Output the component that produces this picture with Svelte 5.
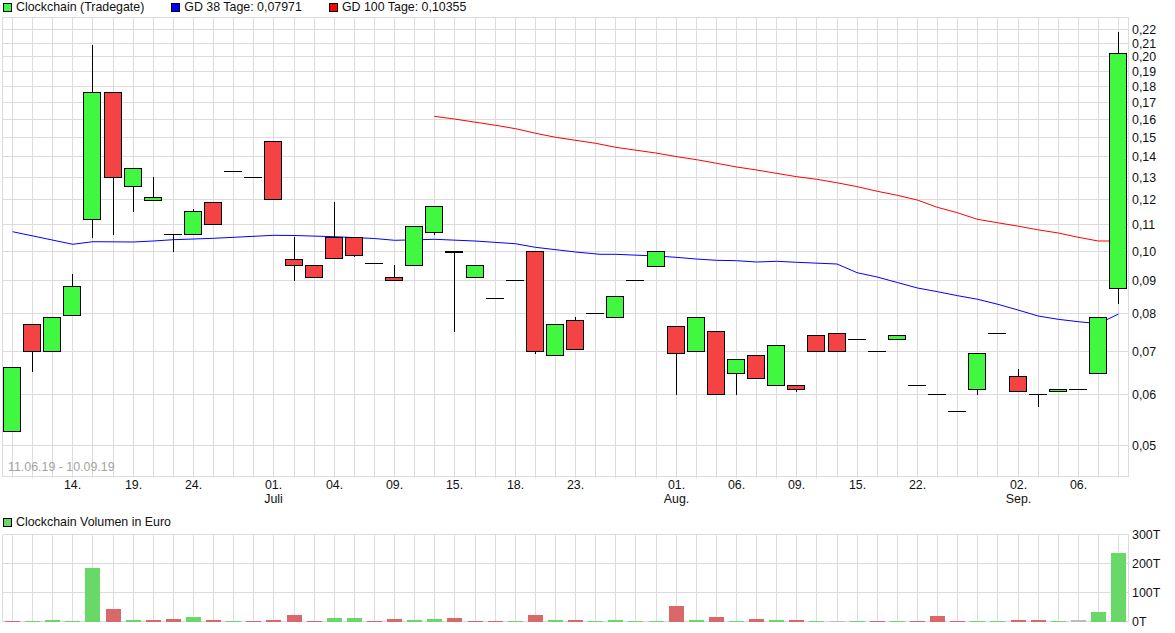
<script>
  // [type, top, bottom, wickTop, wickBottom] - type d is a doji (just a line)
  const candles = [
    ["g", 367.5, 431.5],
    ["r", 324.5, 351.5, 0, 372],
    ["g", 317.5, 351.5],
    ["g", 286.5, 315.5, 274],
    ["g", 92.5, 219.5, 45, 238],
    ["r", 92.5, 177.5, 0, 235],
    ["g", 168.5, 186.5, 0, 212],
    ["g", 197.5, 200.5, 177],
    ["d", 234.5, 234.5, 0, 252],
    ["g", 211.5, 234.5, 209],
    ["r", 202.5, 224.5],
    ["d", 171.5, 171.5],
    ["d", 177.5, 177.5],
    ["r", 141.5, 199.5],
    ["r", 259.5, 265.5, 237, 281],
    ["r", 265.5, 277.5],
    ["r", 237.5, 258.5, 202],
    ["r", 237.5, 255.5, 0, 257],
    ["d", 263.5, 263.5],
    ["r", 277.5, 280.5, 265],
    ["g", 226.5, 265.5],
    ["g", 206.5, 232.5, 0, 235],
    ["D", 251.5, 251.5, 0, 332],
    ["g", 265.5, 277.5],
    ["d", 298.5, 298.5],
    ["d", 280.5, 280.5],
    ["r", 251.5, 351.5, 0, 354],
    ["g", 324.5, 355.5],
    ["r", 320.5, 349.5, 317],
    ["d", 313.5, 313.5],
    ["g", 296.5, 317.5],
    ["d", 280.5, 280.5],
    ["g", 251.5, 266.5],
    ["r", 326.5, 353.5, 0, 395],
    ["g", 317.5, 351.5],
    ["r", 331.5, 394.5],
    ["g", 359.5, 373.5, 0, 395],
    ["r", 355.5, 378.5],
    ["g", 345.5, 385.5],
    ["r", 385.5, 389.5, 0, 392],
    ["r", 335.5, 351.5],
    ["r", 333.5, 351.5],
    ["d", 339.5, 339.5],
    ["d", 351.5, 351.5],
    ["g", 335.5, 339.5],
    ["d", 385.5, 385.5],
    ["d", 394.5, 394.5],
    ["d", 411.5, 411.5],
    ["g", 353.5, 389.5, 0, 395],
    ["d", 333.5, 333.5],
    ["r", 376.5, 391.5, 369],
    ["d", 394.5, 394.5, 0, 407],
    ["g", 389.5, 391.5],
    ["d", 389.5, 389.5],
    ["g", 317.5, 373.5],
    ["g", 53.5, 288.5, 32, 304],
  ];

  // [type, top]
  const volumes = [
    ["r", 621], ["g", 621], ["g", 620], ["g", 621], ["g", 568], ["r", 609], ["g", 620],
    ["r", 620], ["r", 619], ["g", 617], ["r", 620], ["g", 621], ["r", 621], ["r", 620],
    ["r", 615], ["r", 621], ["g", 618], ["g", 618], ["r", 621], ["r", 619], ["g", 620],
    ["g", 619], ["r", 618], ["r", 621], ["r", 621], ["g", 621], ["r", 615], ["g", 620],
    ["r", 620], ["g", 621], ["g", 620], ["g", 621], ["g", 621], ["r", 606], ["g", 620],
    ["r", 617], ["g", 621], ["r", 619], ["g", 620], ["r", 620], ["g", 621], ["n", 621],
    ["g", 621], ["r", 621], ["g", 621], ["r", 621], ["r", 616], ["r", 621], ["g", 621],
    ["g", 621], ["r", 620], ["r", 620], ["g", 621], ["n", 620], ["g", 612], ["g", 553],
  ];

  const gd38 = "12.5,231.7 72.8,244.3 92.9,241.7 133.2,242 153.3,241 173.4,239.7 213.6,238.3 273.9,235.3 294,235.5 334.3,236.7 374.5,238.5 394.6,240.3 434.8,239.3 475,241 515.3,243.7 535.4,247.3 575.6,252 600,254.3 615.8,254.3 656,256 676.1,257.3 696.2,259 716.4,260.3 736.5,260.7 756.6,262 776.7,261.3 796.8,262.3 837,264 857.1,272.7 877.2,277 897.3,282.5 917.5,288 937.6,291.7 957.7,295.7 977.8,299.3 997.9,304.3 1018,310 1038.1,316 1058.2,319.3 1078.3,321.7 1098.4,323.7 1118.5,314";
  const gd100 = "434.3,116.3 454.3,119 495.7,125.3 515.7,128.7 535.7,133.3 555.7,137.3 595.7,143.3 615.7,147.3 655.7,153 677,156.7 696.7,159.7 716.7,163.3 736.7,167 756.7,170 776.3,173.3 796.7,176.7 816.7,179.3 836.7,182.7 857.3,186.7 877.3,191.3 897.3,195.3 917.3,200 937.3,207.3 957.3,212.7 977.3,219.3 997.3,222.7 1017.3,226 1037.3,229.7 1058.3,233 1078.3,237.3 1098.3,241 1109,241 1118.5,241";

  const priceLines = [
    ["0,22", 29.5], ["0,21", 43.5], ["0,20", 56.5], ["0,19", 71.5], ["0,18", 86.5], ["0,17", 102.5],
    ["0,16", 119.5], ["0,15", 137.5], ["0,14", 156.5], ["0,13", 177.5], ["0,12", 199.5], ["0,11", 224.5],
    ["0,10", 251.5], ["0,09", 280.5], ["0,08", 313.5], ["0,07", 351.5], ["0,06", 394.5], ["0,05", 445.5],
  ];
  const volumeLines = [["300T", 534.5], ["200T", 563.5], ["100T", 592.5], ["0T", 621.5]];

  // [candle index, day, month]
  const dates = [
    [3, "14."], [6, "19."], [9, "24."], [13, "01.", "Juli"], [16, "04."], [19, "09."], [22, "15."], [25, "18."],
    [28, "23."], [33, "01.", "Aug."], [36, "06."], [39, "09."], [42, "15."], [45, "22."], [50, "02.", "Sep."], [53, "06."],
  ];

  const gx = (i) => Math.round(12 + 20.11 * i) + 0.5;
  const colClass = { g: "up", r: "down", n: "flat" };
</script>

<div class="page">
  <div class="legend">
    <span class="item"><i class="box green"></i>Clockchain (Tradegate)</span>
    <span class="item"><i class="box blue"></i>GD 38 Tage: 0,07971</span>
    <span class="item"><i class="box red"></i>GD 100 Tage: 0,10355</span>
  </div>

  <svg class="price" width="1175" height="500" viewBox="0 15 1175 500">
    <g class="grid">
      {#each candles as _, i}
        <line x1={gx(i)} x2={gx(i)} y1="17.5" y2="478" />
      {/each}
      {#each priceLines as row}
        <line x1="2.5" x2="1128.5" y1={row[1]} y2={row[1]} />
      {/each}
      <rect x="2.5" y="17.5" width="1126" height="459" />
    </g>

    <polyline class="gd38" points={gd38} />
    <polyline class="gd100" points={gd100} />

    {#each candles as c, i}
      {#if c[3]}
        <line class="wick" x1={gx(i)} x2={gx(i)} y1={c[3]} y2={c[1]} />
      {/if}
      {#if c[4]}
        <line class="wick" x1={gx(i)} x2={gx(i)} y1={c[2]} y2={c[4]} />
      {/if}
      {#if c[0] === "d" || c[0] === "D"}
        <line class={c[0] === "D" ? "doji thick" : "doji"} x1={gx(i) - 9.5} x2={gx(i) + 8.5} y1={c[1]} y2={c[1]} />
      {:else}
        <rect class={"body " + (c[0] === "g" ? "up" : "down")} x={gx(i) - 9} y={c[1]} width="17" height={c[2] - c[1]} />
      {/if}
    {/each}

    <text class="range" x="8" y="470.5">11.06.19 - 10.09.19</text>

    {#each priceLines as row}
      <text x="1132" y={row[1] + 4.5}>{row[0]}</text>
    {/each}
    {#each dates as d}
      <text class="mid" x={gx(d[0])} y="488.5">{d[1]}</text>
      {#if d[2]}
        <text class="mid" x={gx(d[0])} y="503">{d[2]}</text>
      {/if}
    {/each}
  </svg>

  <div class="legend short">
    <span class="item"><i class="box volgreen"></i>Clockchain Volumen in Euro</span>
  </div>

  <svg class="volume" width="1175" height="107" viewBox="0 526 1175 107">
    <g class="grid">
      {#each candles as _, i}
        <line x1={gx(i)} x2={gx(i)} y1="534.5" y2="621.5" />
      {/each}
      {#each volumeLines as row}
        <line x1="2.5" x2="1128.5" y1={row[1]} y2={row[1]} />
      {/each}
      <line x1="2.5" x2="2.5" y1="534.5" y2="621.5" />
      <line x1="1128.5" x2="1128.5" y1="534.5" y2="621.5" />
    </g>

    {#each volumes as v, i}
      <rect class={"bar " + colClass[v[0]]} x={gx(i) - 7.5} y={v[1]} width="15" height={622 - v[1]} />
    {/each}

    {#each volumeLines as row}
      <text x="1132" y={row[1] + 4}>{row[0]}</text>
    {/each}
  </svg>
</div>

<style>
  :global(body) {
    margin: 0;
    background: #fff;
  }
  .page {
    width: 1175px;
    height: 633px;
    overflow: hidden;
    font-family: "Liberation Sans", Arial, sans-serif;
    font-size: 12.4px;
    color: #111;
  }
  .legend {
    display: flex;
    gap: 27px;
    height: 15px;
    padding-left: 3px;
    line-height: 14px;
  }
  .legend.short {
    height: 11px;
  }
  .item {
    display: flex;
    align-items: flex-start;
    gap: 4px;
    white-space: nowrap;
  }
  .box {
    display: block;
    width: 9px;
    height: 9px;
    margin-top: 3px;
    box-sizing: border-box;
    border: 1px solid #000;
  }
  .green { background: #40f840; }
  .blue { background: #0000ff; }
  .red { background: #ff0000; }
  .volgreen { background: #68d968; }

  svg {
    display: block;
  }
  text {
    font-family: "Liberation Sans", Arial, sans-serif;
    font-size: 12.4px;
    fill: #111;
  }
  .mid {
    text-anchor: middle;
  }
  .range {
    fill: #a3a3a3;
  }
  .grid line,
  .grid rect {
    fill: none;
    stroke: #dcdcdc;
    stroke-width: 1;
    shape-rendering: crispEdges;
  }
  .gd38,
  .gd100 {
    fill: none;
    stroke-width: 1;
  }
  .gd38 { stroke: #0000ff; }
  .gd100 { stroke: #ff0000; }
  .wick,
  .doji {
    stroke: #000;
    stroke-width: 1;
    shape-rendering: crispEdges;
  }
  .thick {
    stroke-width: 2;
  }
  .body {
    stroke: #000;
    stroke-width: 1;
    shape-rendering: crispEdges;
  }
  .body.up { fill: #40f840; }
  .body.down { fill: #f54343; }
  .bar {
    shape-rendering: crispEdges;
  }
  .bar.up { fill: #68d968; }
  .bar.down { fill: #d96868; }
  .bar.flat { fill: #bbbbbb; }
</style>
